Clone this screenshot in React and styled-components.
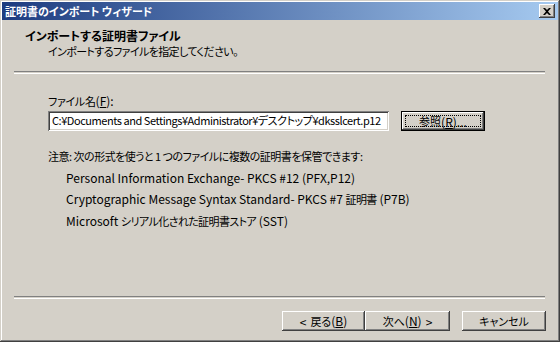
import styled, { createGlobalStyle } from "styled-components";

const GlobalStyle = createGlobalStyle`
  html, body {
    margin: 0;
    padding: 0;
    background: #d4d0c8;
  }
  body {
    font-family: "Noto Sans CJK JP", "Noto Sans", sans-serif;
    font-size: 12px;
    font-feature-settings: "palt";
    color: #000;
  }
`;

const raised = `
  box-shadow: inset -1px -1px #404040, inset 1px 1px #ffffff,
    inset -2px -2px #808080, inset 2px 2px #d4d0c8;
`;

// Japanese runs are set tighter, like the bitmap UI font of the original
const Jp = styled.span`
  font-size: 11px;
  letter-spacing: ${(p) => p.$ls ?? -0.6}px;
`;

const Window = styled.div`
  width: 560px;
  height: 342px;
  box-sizing: border-box;
  padding: 2px;
  background: #d4d0c8;
  display: flex;
  flex-direction: column;
  box-shadow: inset -1px -1px #404040, inset 1px 1px #d4d0c8,
    inset -2px -2px #808080, inset 2px 2px #ffffff;
`;

const TitleBar = styled.div`
  height: 18px;
  padding: 0 3px 0 3px;
  display: flex;
  align-items: center;
  justify-content: space-between;
  background: linear-gradient(to right, #1d3c80, #a6caf0);
  color: #fff;
  font-weight: bold;
  font-size: 11px;
  line-height: 18px;
`;

const CloseButton = styled.div`
  width: 16px;
  height: 14px;
  box-sizing: border-box;
  background: #d4d0c8;
  display: flex;
  align-items: center;
  justify-content: center;
  ${raised}
`;

const Header = styled.div`
  padding: 9px 0 0 23px;
  line-height: 15px;
`;

const HeaderTitle = styled.div`
  font-weight: bold;
  line-height: 14px;
  margin-bottom: 1px;
`;

const HeaderSub = styled.div`
  padding-left: 23px;
  line-height: 14px;
`;

const Separator = styled.div`
  margin: ${(p) => p.$top || 0}px 13px 0 12px;
  height: 1px;
  border-top: 1px solid #808080;
  border-bottom: 1px solid #ffffff;
`;

const Body = styled.div`
  flex: 1;
  padding: 19px 0 0 46px;
  line-height: 15px;
`;

const FieldRow = styled.div`
  display: flex;
  align-items: center;
  gap: 12px;
  margin-top: 2px;
`;

const PathInput = styled.div`
  width: 341px;
  height: 20px;
  box-sizing: border-box;
  background: #fff;
  padding: 2px 3px 0 4px;
  font-size: 11px;
  letter-spacing: -0.45px;
  white-space: nowrap;
  overflow: hidden;
  box-shadow: inset 1px 1px #808080, inset -1px -1px #ffffff,
    inset 2px 2px #404040, inset -2px -2px #d4d0c8;
`;

const BrowseButton = styled.div`
  width: 84px;
  height: 20px;
  box-sizing: border-box;
  border: 1px solid #000;
  display: flex;
  align-items: center;
  justify-content: center;
  position: relative;
  ${raised}

  &::after {
    content: "";
    position: absolute;
    inset: 3px;
    border: 1px dotted #000;
  }
`;

const Note = styled.div`
  margin-top: 17px;
`;

const FormatList = styled.div`
  padding: 6px 0 0 18px;
  display: flex;
  flex-direction: column;
  gap: 6px;
`;

const Footer = styled.div`
  padding-bottom: 9px;
`;

const ButtonRow = styled.div`
  display: flex;
  justify-content: flex-end;
  margin: 12px 12px 0 0;
`;

const Button = styled.div`
  width: ${(p) => p.$w || 83}px;
  height: 20px;
  box-sizing: border-box;
  margin-left: ${(p) => p.$gap || 0}px;
  display: flex;
  align-items: center;
  justify-content: center;
  gap: ${(p) => p.$textGap || 0}px;
  line-height: 15px;
  white-space: pre;
  ${raised}
`;

export default function App() {
  const formats = [
    ["Personal Information Exchange- PKCS #12 (PFX,P12)", "", ""],
    ["Cryptographic Message Syntax Standard- PKCS #7 ", "証明書", " (P7B)"],
    ["Microsoft ", "シリアル化された証明書ストア", " (SST)"],
  ];

  return (
    <>
      <GlobalStyle />
      <Window>
        <TitleBar>
          <span>証明書のインポート ウィザード</span>
          <CloseButton>
            <svg width="8" height="7" viewBox="0 0 8 7">
              <path d="M0 0h2l2 2 2-2h2L5 3.5 8 7H6L4 5 2 7H0l3-3.5z" fill="#000" />
            </svg>
          </CloseButton>
        </TitleBar>

        <Header>
          <HeaderTitle>インポートする証明書ファイル</HeaderTitle>
          <HeaderSub>
            <Jp>インポートするファイルを指定してください。</Jp>
          </HeaderSub>
        </Header>
        <Separator $top={13} />

        <Body>
          <div>
            <Jp $ls={-0.3}>ファイル名</Jp>(<u>F</u>):
          </div>
          <FieldRow>
            <PathInput>
              C:¥Documents and Settings¥Administrator¥デスクトップ¥dksslcert.p12
            </PathInput>
            <BrowseButton>
              <Jp $ls={0}>参照</Jp>(<u>R</u>)...
            </BrowseButton>
          </FieldRow>
          <Note>
            <Jp $ls={-0.5}>注意: 次の形式を使うと 1 つのファイルに複数の証明書を保管できます:</Jp>
          </Note>
          <FormatList>
            {formats.map(([a, jp, b]) => (
              <div key={a}>
                {a}
                {jp && <Jp>{jp}</Jp>}
                {b}
              </div>
            ))}
          </FormatList>
        </Body>

        <Footer>
          <Separator />
          <ButtonRow>
            <Button $textGap={4}>
              <span>&lt;</span>
              <span>
                <Jp $ls={0}>戻る</Jp>(<u>B</u>)
              </span>
            </Button>
            <Button $w={85} $textGap={4}>
              <span>
                <Jp $ls={0}>次へ</Jp>(<u>N</u>)
              </span>
              <span>&gt;</span>
            </Button>
            <Button $w={84} $gap={12}>
              <Jp $ls={0}>キャンセル</Jp>
            </Button>
          </ButtonRow>
        </Footer>
      </Window>
    </>
  );
}
